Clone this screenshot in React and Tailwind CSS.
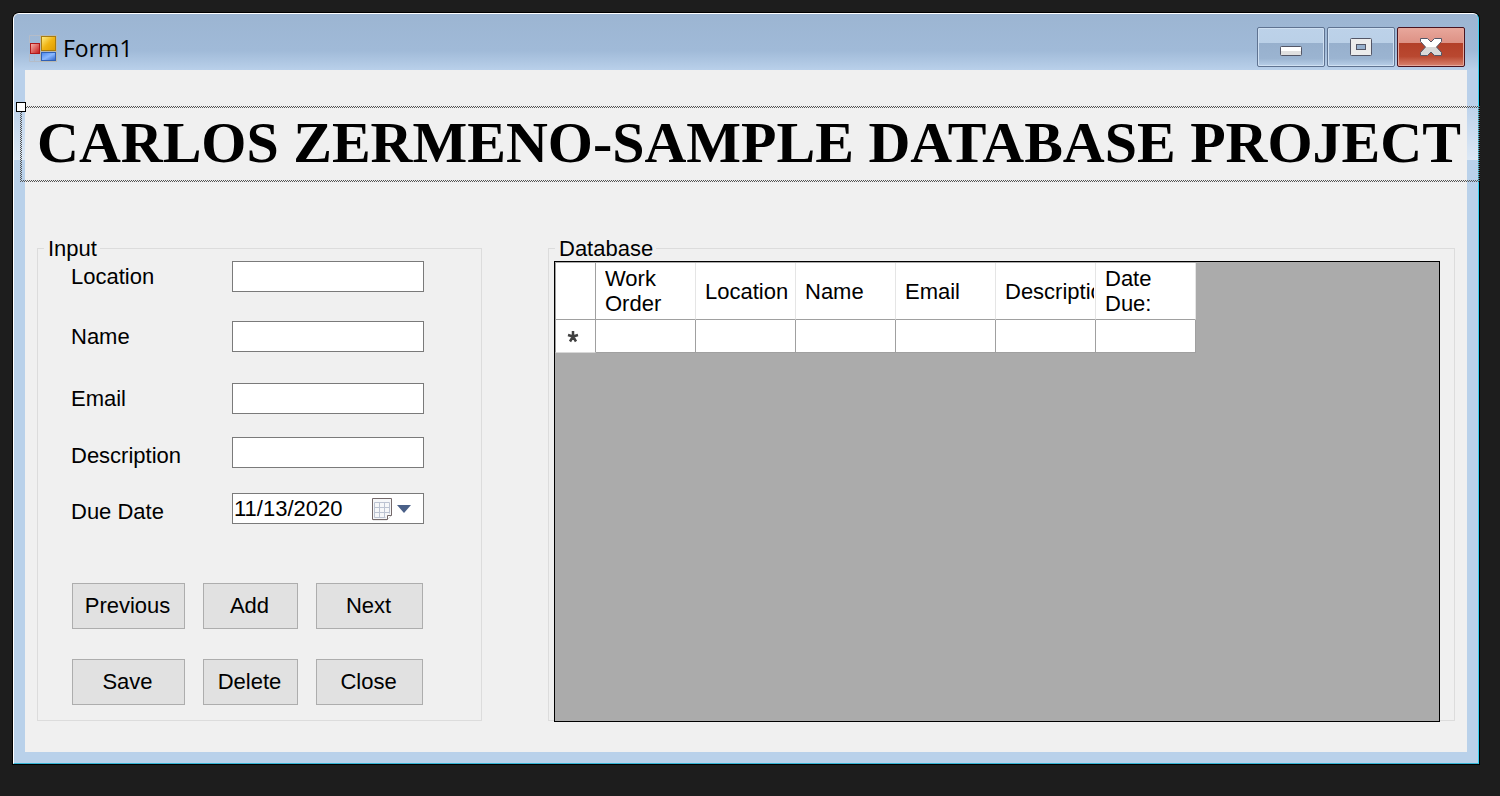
import React from 'react';

const textFields = [
  { id: 'location', label: 'Location', row: 'items-center' },
  { id: 'name', label: 'Name', row: 'items-center mt-[29px]' },
  { id: 'email', label: 'Email', row: 'items-center mt-[31px]' },
  { id: 'description', label: 'Description', row: 'items-end mt-[23px]' },
];

const actions = ['Previous', 'Add', 'Next', 'Save', 'Delete', 'Close'];

const columns = ['Work Order', 'Location', 'Name', 'Email', 'Description', 'Date Due:'];

function AppIcon() {
  return (
    <svg width="28" height="27" viewBox="0 0 28 27" aria-hidden="true">
      <defs>
        <linearGradient id="yellow" x1="0" y1="0" x2="1" y2="1">
          <stop offset="0" stopColor="#fff08a" />
          <stop offset="0.5" stopColor="#f0b414" />
          <stop offset="1" stopColor="#dc9a00" />
        </linearGradient>
        <linearGradient id="red" x1="0" y1="0" x2="1" y2="1">
          <stop offset="0" stopColor="#f8b8b0" />
          <stop offset="1" stopColor="#c41414" />
        </linearGradient>
        <linearGradient id="blue" x1="0" y1="0" x2="1" y2="1">
          <stop offset="0" stopColor="#4a86ec" />
          <stop offset="0.5" stopColor="#8ab8ff" />
          <stop offset="1" stopColor="#2c62cc" />
        </linearGradient>
      </defs>
      <path d="M0.5 8V0.5H11M0.5 19V26.5H11M5.5 20V26" fill="none" stroke="#b4bcc8" />
      <rect x="11.5" y="0.5" width="16" height="26" fill="#b8b8b0" stroke="#b8b8b0" />
      <rect x="12.5" y="1.5" width="14" height="14" fill="url(#yellow)" stroke="#a87c10" />
      <rect x="1.5" y="8.5" width="9" height="10" fill="url(#red)" stroke="#b01818" />
      <rect x="12.5" y="17.5" width="14" height="8" fill="url(#blue)" stroke="#3060b4" />
    </svg>
  );
}

function CaptionButton({ label, tone, children }) {
  return (
    <button
      type="button"
      aria-label={label}
      className={`flex h-10 w-[68px] items-center justify-center rounded-[2px] border ${tone}`}
    >
      {children}
    </button>
  );
}

const blueTone =
  'border-[#5f7391] bg-[linear-gradient(#bdd2e9_0,#bad0e7_40%,#97b0cd_40%,#9bb4d1_80%,#b8cfe8_100%)] shadow-[inset_0_0_0_1px_#cfe0f2]';
const redTone =
  'border-[#4a1420] bg-[linear-gradient(#e8a79c_0,#dd9184_40%,#b33f28_40%,#b94830_75%,#d98470_100%)] shadow-[inset_0_0_0_1px_#e5a89c]';

function TitleBar() {
  return (
    <header className="flex h-14 items-start justify-between rounded-t-[5px] bg-[linear-gradient(#9cb5d2_0,#a0bad8_65%,#b9d0ea_100%)] pl-[15px] pr-[13px] pt-[13px]">
      <div className="flex items-center gap-[6px] pt-[6px]">
        <AppIcon />
        <span className="font-['Open_Sans','Noto_Sans',sans-serif] text-[23px] leading-[30px]">Form1</span>
      </div>
      <div className="flex gap-[2px]">
        <CaptionButton label="Minimize" tone={blueTone}>
          <svg width="24" height="20" viewBox="0 0 24 20" aria-hidden="true">
            <rect x="1.5" y="9.5" width="21" height="9" rx="1" fill="#e0e0e0" stroke="#535666" />
            <path d="M2 12H22" stroke="#fff" strokeWidth="4" />
          </svg>
        </CaptionButton>
        <CaptionButton label="Maximize" tone={blueTone}>
          <svg width="24" height="20" viewBox="0 0 24 20" aria-hidden="true">
            <rect x="1.5" y="1.5" width="21" height="17" rx="1" fill="#ececec" stroke="#535666" />
            <rect x="7.5" y="7.5" width="9" height="5" fill="#97b0cd" stroke="#535666" />
          </svg>
        </CaptionButton>
        <CaptionButton label="Close window" tone={redTone}>
          <svg width="24" height="20" viewBox="0 0 24 20" aria-hidden="true">
            <defs>
              <linearGradient id="cross" x1="0" y1="0" x2="0" y2="1">
                <stop offset="0.5" stopColor="#ffffff" />
                <stop offset="0.5" stopColor="#d8d8d8" />
              </linearGradient>
            </defs>
            <path
              d="M1.500 1.500H8.500L12 5L15.500 1.500H22.500V4.500L17.500 10L22.500 15.500V18.500H15.500L12 15L8.500 18.500H1.500V15.500L6.500 10L1.500 4.500Z"
              fill="url(#cross)"
              stroke="#535666"
              strokeLinejoin="round"
            />
          </svg>
        </CaptionButton>
      </div>
    </header>
  );
}

const dither =
  'absolute bg-[conic-gradient(#555_25%,transparent_25%_50%,#555_50%_75%,transparent_75%)] bg-[length:2px_2px]';

function Banner() {
  return (
    <div className="relative -ml-[5px] -mr-[13px] flex h-[76px] items-center pl-[17px]">
      <span className={`${dither} inset-x-0 top-0 h-[2px]`} />
      <span className={`${dither} inset-x-0 bottom-0 h-[2px]`} />
      <span className={`${dither} inset-y-0 left-0 w-[2px]`} />
      <span className={`${dither} inset-y-0 right-0 w-[2px]`} />
      <span className="absolute -left-1 -top-1 size-[10px] border border-black bg-white" />
      <h1 className="whitespace-nowrap pb-[2px] font-['Liberation_Serif',serif] text-[58px] font-bold leading-[64px]">
        CARLOS ZERMENO-SAMPLE DATABASE PROJECT
      </h1>
    </div>
  );
}

function CalendarIcon() {
  return (
    <svg width="22" height="24" viewBox="0 0 22 24" aria-hidden="true">
      <path d="M2 23H16L21 18" fill="none" stroke="#d8d8d8" />
      <path d="M1.500 1.500H20.500V18.500H16.500V22.500H1.500Z" fill="#f6f7f9" stroke="#74696a" />
      <path
        d="M3.500 5.500H18.500M3.500 10.500H18.500M3.500 15.500H18.500M3.500 20.500H14.500M3.500 5.500V20.500M8.500 5.500V20.500M13.500 5.500V20.500M18.500 5.500V16.500"
        fill="none"
        stroke="#bcc3d2"
      />
    </svg>
  );
}

function InputGroup() {
  return (
    <fieldset className="w-[445px] shrink-0 border border-[#dcdcdc] pb-[15px] pl-[33px]">
      <legend className="-ml-[27px] pl-1 pr-[3px]">Input</legend>
      {textFields.map((field) => (
        <div key={field.id} className={`flex ${field.row}`}>
          <label htmlFor={field.id} className="w-[161px]">
            {field.label}
          </label>
          <input
            id={field.id}
            type="text"
            className="h-[31px] w-48 border border-[#7a7a7a] bg-white px-[2px] outline-none"
          />
        </div>
      ))}
      <div className="mt-[25px] flex items-end">
        <label htmlFor="due" className="w-[161px]">
          Due Date
        </label>
        <div className="flex h-[31px] w-48 items-center border border-[#7a7a7a] bg-white">
          <input
            id="due"
            type="text"
            defaultValue="11/13/2020"
            className="w-[138px] bg-transparent pl-[1px] outline-none"
          />
          <button type="button" aria-label="Open calendar" className="flex items-center gap-1">
            <CalendarIcon />
            <svg width="14" height="8" viewBox="0 0 14 8" aria-hidden="true">
              <path d="M0 0H14L7 8Z" fill="#4a6088" />
            </svg>
          </button>
        </div>
      </div>
      <div className="ml-[1px] mt-[59px] grid grid-cols-[113px_95px_107px] gap-x-[18px] gap-y-[30px]">
        {actions.map((action) => (
          <button
            key={action}
            type="button"
            className="h-[46px] border border-[#adadad] bg-[#e1e1e1] pb-[2px] pr-[2px]"
          >
            {action}
          </button>
        ))}
      </div>
    </fieldset>
  );
}

function DatabaseGroup() {
  return (
    <fieldset className="flex min-w-0 flex-1 flex-col border border-[#dcdcdc] pl-[5px] pr-[14px]">
      <legend className="ml-[1px] pl-1 pr-[3px]">Database</legend>
      <div className="-mb-[2px] flex-1 border border-black bg-[#ababab] pt-px">
        <table className="w-[641px] table-fixed border-separate border-spacing-0 bg-white">
          <thead>
            <tr className="h-[57px]">
              <th scope="col" aria-label="Row" className="w-[41px] border-b border-l border-r border-[#a0a0a0] p-0" />
              {columns.map((column) => (
                <th
                  key={column}
                  scope="col"
                  className="border-b border-r border-b-[#a0a0a0] border-r-[#e5e5e5] py-0 pl-[9px] pr-[1px] text-left font-normal"
                >
                  <div className="overflow-hidden">{column}</div>
                </th>
              ))}
            </tr>
          </thead>
          <tbody>
            <tr className="h-[33px]">
              <th
                scope="row"
                aria-label="New row"
                className="border-b border-l border-r border-b-[#d8d8d8] border-l-[#a0a0a0] border-r-[#a0a0a0] p-0"
              >
                <svg className="ml-[11px]" width="12" height="13" viewBox="0 0 12 13" aria-hidden="true">
                  <path
                    d="M6 6.500V1M6 6.500L1 5M6 6.500L11 5M6 6.500L3 11.500M6 6.500L9 11.500"
                    stroke="#404040"
                    strokeWidth="2.500"
                  />
                </svg>
              </th>
              {columns.map((column) => (
                <td key={column} className="border-b border-r border-[#a0a0a0] p-0" />
              ))}
            </tr>
          </tbody>
        </table>
      </div>
    </fieldset>
  );
}

export default function App() {
  return (
    <div className="min-h-screen bg-[#1d1d1d] pb-8 pl-[13px] pr-[21px] pt-[13px] font-['Liberation_Sans',sans-serif] text-[22px] leading-[25px] text-black">
      <div className="rounded-t-[6px] border border-b-[#35b4d4] border-l-white border-r-[#35d0f0] border-t-white bg-[#b9d1ea] shadow-[0_0_0_1px_#000]">
        <TitleBar />
        <div className="bg-[linear-gradient(#b9d0ea_0,#b9d0ea_30px,#dce8f5_90px,#b9d1ea_90px)] px-[11px] pb-[11px]">
          <main className="bg-[#f0f0f0] pb-[31px] pt-9">
            <Banner />
            <div className="mt-[54px] flex gap-[66px] px-3">
              <InputGroup />
              <DatabaseGroup />
            </div>
          </main>
        </div>
      </div>
    </div>
  );
}
